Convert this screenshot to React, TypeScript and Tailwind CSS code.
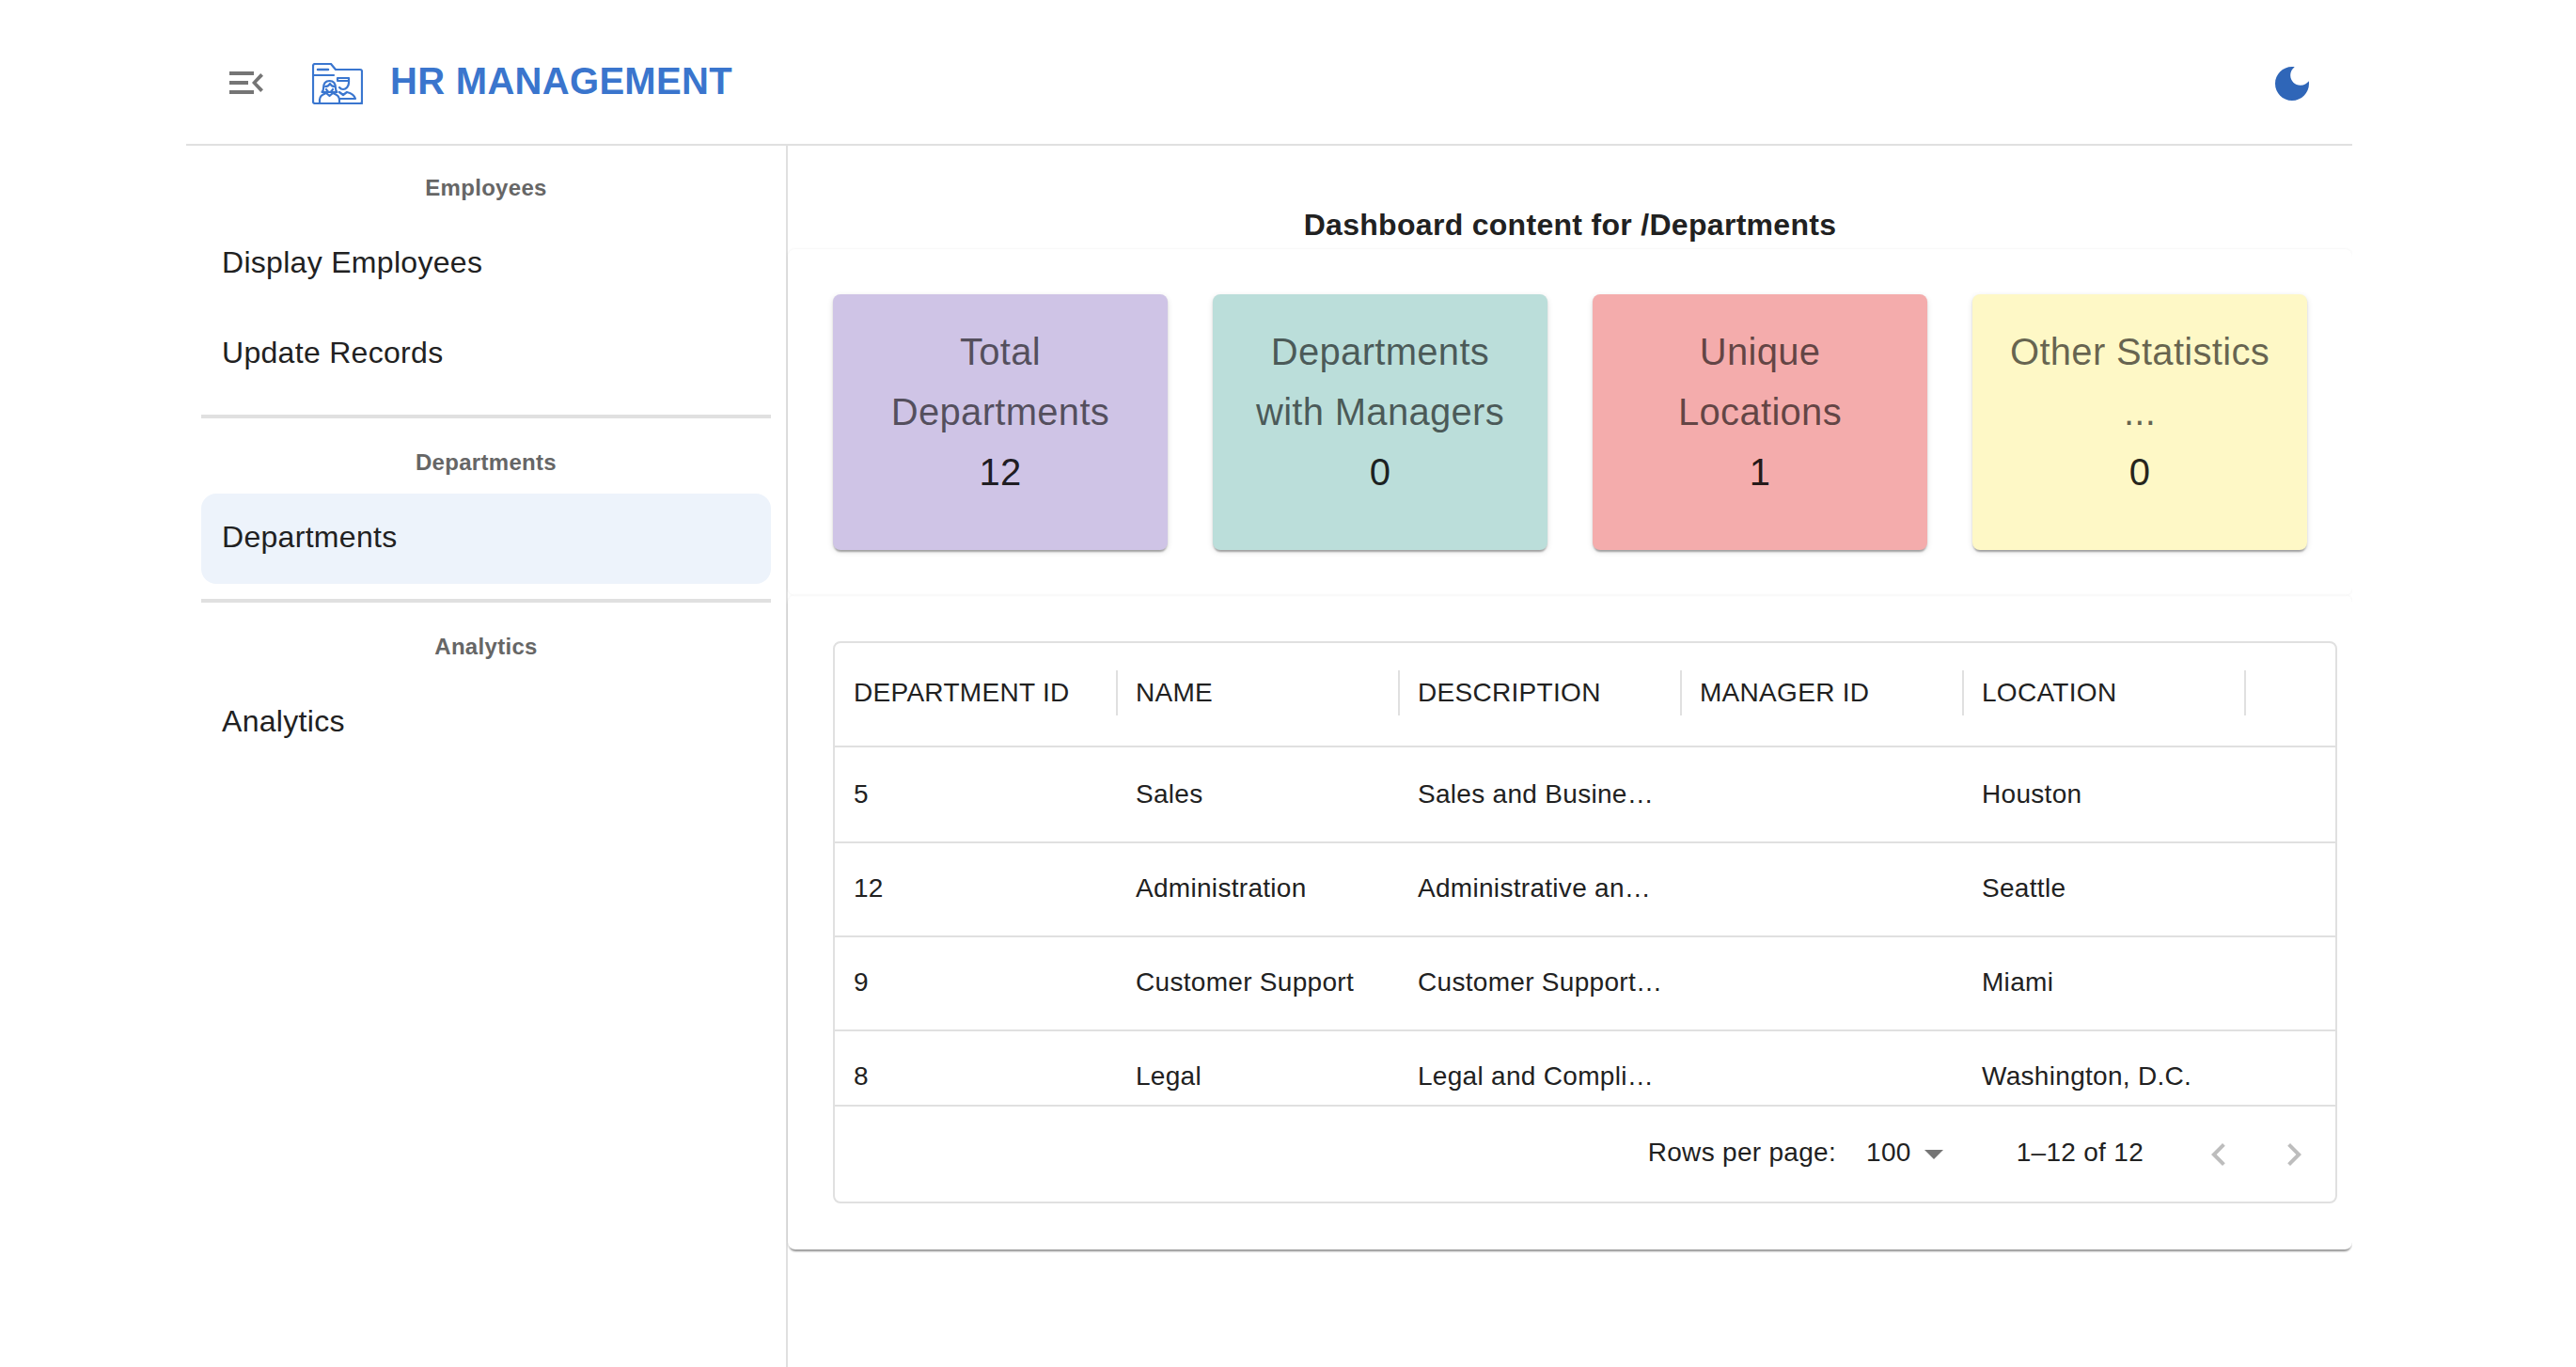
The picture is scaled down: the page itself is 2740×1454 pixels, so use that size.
import React from 'react';

const sidebar = [
  { title: 'Employees', items: ['Display Employees', 'Update Records'] },
  { title: 'Departments', items: ['Departments'] },
  { title: 'Analytics', items: ['Analytics'] },
];

const stats = [
  { lines: ['Total', 'Departments'], value: '12', bg: 'bg-[#cfc4e6]' },
  { lines: ['Departments', 'with Managers'], value: '0', bg: 'bg-[#bbdeda]' },
  { lines: ['Unique', 'Locations'], value: '1', bg: 'bg-[#f4acac]' },
  { lines: ['Other Statistics', '...'], value: '0', bg: 'bg-[#fef8c6]' },
];

const columns = ['DEPARTMENT ID', 'NAME', 'DESCRIPTION', 'MANAGER ID', 'LOCATION'];

const rows = [
  ['5', 'Sales', 'Sales and Busine…', '', 'Houston'],
  ['12', 'Administration', 'Administrative an…', '', 'Seattle'],
  ['9', 'Customer Support', 'Customer Support…', '', 'Miami'],
  ['8', 'Legal', 'Legal and Compli…', '', 'Washington, D.C.'],
];

const Logo = () => (
  <svg width="54" height="44" viewBox="0 0 54 44" fill="none" stroke="#3a76cf" strokeWidth="2.2" strokeLinejoin="round" strokeLinecap="round">
    <path d="M1 3a2 2 0 0 1 2-2h17l5 6h26a2 2 0 0 1 2 2v32a2 2 0 0 1-2 2H3a2 2 0 0 1-2-2z" />
    <path d="M1 13h22" />
    <path d="M6 7h11" strokeWidth="2.5" />
    <path d="M12 27c0-5 2.500-8 6.500-8s6.500 3 6.500 8c0 2 .5 3 1.500 4h-16c1-1 1.500-2 1.500-4z" />
    <path d="M14 25c2 0 4-1 5-3 1 2 3 3 5 3" />
    <path d="M15 28c1 2 2 3 3.500 3s2.500-1 3.500-3" />
    <path d="M8 43v-4c0-4 4-6 7-7l3.500 3 3.500-3c3 1 7 3 7 7v4" />
    <path d="M27 18v-2h12v5c0 4-3 7-6 7-1.500 0-3-.7-4-2" />
    <path d="M27 19h12" />
    <path d="M29 31l4 3 4-3c4 1 8 3 9 7h-17" />
    <path d="M31 43h22" />
  </svg>
);

export default function App() {
  return (
    <div className="ml-[198px] flex h-[1454px] w-[2304px] flex-col overflow-hidden bg-white font-['Liberation_Sans',Arial,sans-serif] text-[#212121]">
      <header className="flex h-[155px] shrink-0 items-center border-b-2 border-[#e0e0e0] pl-[40px] pt-[22px]">
        <svg width="48" height="48" viewBox="0 0 24 24" fill="#757575">
          <path d="M3 18h13v-2H3v2zm0-5h10v-2H3v2zm0-7v2h13V6H3zm18 9.590L17.420 12 21 8.410 19.590 7 15 12l4.590 5L21 15.590z" />
        </svg>
        <div className="ml-[46px] mt-[2px]">
          <Logo />
        </div>
        <h1 className="mb-[3px] ml-[29px] text-[40px] font-bold leading-[60px] tracking-[0.3px] text-[#3a75cd]">HR MANAGEMENT</h1>
        <div className="ml-auto mr-[40px] mt-[3px]">
          <svg width="48" height="48" viewBox="0 0 24 24" fill="#2f66b8">
            <path d="M12 3c-4.970 0-9 4.030-9 9s4.030 9 9 9 9-4.030 9-9c0-.460-.040-.920-.100-1.360-.980 1.370-2.580 2.260-4.400 2.260-2.980 0-5.400-2.420-5.400-5.400 0-1.810.890-3.420 2.260-4.400-.440-.060-.900-.100-1.360-.100z" />
          </svg>
        </div>
      </header>

      <div className="flex min-h-0 flex-1">
        <aside className="w-[640px] shrink-0 border-r-2 border-[#e0e0e0] px-[16px] pt-[14px]">
          {sidebar.map((group, i) => (
            <div key={group.title}>
              {i > 0 && <div className="my-[16px] h-[4px] bg-[#e0e0e0]" />}
              <div className="h-[64px] text-center text-[24px] font-bold leading-[62px] tracking-[0.3px] text-[#666666]">{group.title}</div>
              {group.items.map((item) => (
                <div
                  key={item}
                  className={
                    item === 'Departments'
                      ? 'flex h-[96px] items-center rounded-[16px] bg-[#edf3fb] pb-[4px] pl-[22px] text-[32px] tracking-[0.3px]'
                      : 'flex h-[96px] items-center pb-[4px] pl-[22px] text-[32px] tracking-[0.3px]'
                  }
                >
                  {item}
                </div>
              ))}
            </div>
          ))}
        </aside>

        <main className="min-w-0 flex-1">
          <h2 className="h-[110px] pt-[60px] text-center text-[32px] font-bold leading-[48px] tracking-[0.3px]">Dashboard content for /Departments</h2>

          <section className="flex h-[368px] gap-[48px] rounded-[8px] p-[48px] shadow-[0_0_3px_rgba(0,0,0,0.07)]">
            {stats.map((s, i) => (
              <div
                key={i}
                className={`flex h-[272px] w-[356px] flex-col items-center rounded-[8px] pt-[29px] text-center text-[40px] leading-[64px] tracking-[0.3px] shadow-[0_4px_2px_-2px_rgba(0,0,0,0.2),0_2px_2px_0_rgba(0,0,0,0.14),0_2px_6px_0_rgba(0,0,0,0.12)] ${s.bg}`}
              >
                {s.lines.map((l) => (
                  <div key={l} className="text-black/60">{l}</div>
                ))}
                <div className="text-black/87">{s.value}</div>
              </div>
            ))}
          </section>

          <section className="h-[696px] rounded-[8px] pl-[48px] pt-[49px] shadow-[0_4px_2px_-2px_rgba(0,0,0,0.3),0_2px_2px_0_rgba(0,0,0,0.14),0_0_3px_0_rgba(0,0,0,0.06)]">
            <div className="flex h-[598px] w-[1600px] flex-col overflow-hidden rounded-[8px] border-2 border-[#e0e0e0] text-[28px] tracking-[0.3px]">
              <div className="flex h-[111px] shrink-0 items-center border-b-2 border-[#e0e0e0] pb-[4px] pl-[1px]">
                {columns.map((c) => (
                  <div key={c} className="flex h-[48px] w-[300px] shrink-0 items-center border-r-2 border-[#e0e0e0] pl-[19px]">
                    {c}
                  </div>
                ))}
              </div>

              <div className="min-h-0 flex-1 overflow-hidden">
                {rows.map((r) => (
                  <div key={r[0]} className="flex h-[100px] items-center border-b-2 border-[#e0e0e0] pb-[2px] first:h-[102px] first:pb-0">
                    {r.map((cell, j) => (
                      <div key={j} className="w-[300px] shrink-0 whitespace-nowrap pl-[20px]">
                        {cell}
                      </div>
                    ))}
                  </div>
                ))}
              </div>

              <div className="flex h-[103px] shrink-0 items-center justify-end border-t-2 border-[#e0e0e0] pb-[4px]">
                <span>Rows per page:</span>
                <span className="ml-[32px]">100</span>
                <svg className="ml-[12px] mt-[4px]" width="24" height="14" viewBox="0 0 24 14" fill="#757575">
                  <path d="M2 2h20L12 12z" />
                </svg>
                <span className="ml-[76px]">1–12 of 12</span>
                <svg className="ml-[56px] mt-[4px]" width="48" height="48" viewBox="0 0 24 24" fill="#bdbdbd">
                  <path d="M15.410 16.590 10.830 12l4.580-4.590L14 6l-6 6 6 6z" />
                </svg>
                <svg className="ml-[32px] mr-[20px] mt-[4px]" width="48" height="48" viewBox="0 0 24 24" fill="#bdbdbd">
                  <path d="M8.590 16.590 13.170 12 8.590 7.410 10 6l6 6-6 6z" />
                </svg>
              </div>
            </div>
          </section>
        </main>
      </div>
    </div>
  );
}
